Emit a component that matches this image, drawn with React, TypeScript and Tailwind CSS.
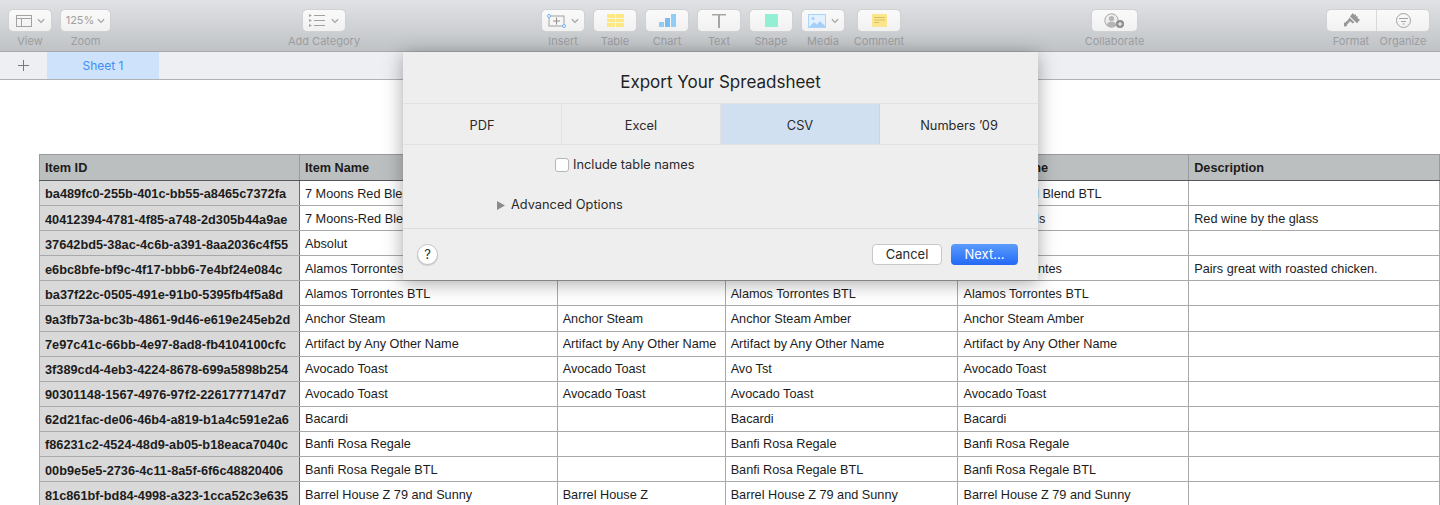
import React from 'react';

const Chevron = () => (
  <svg width="8" height="6" viewBox="0 0 9 6" fill="none" className="shrink-0">
    <path d="M1 1l3.5 3.5L8 1" stroke="#a3a3a3" strokeWidth="1.3" />
  </svg>
);

const ViewIcon = () => (
  <svg width="16" height="12" viewBox="0 0 16 12" fill="none" stroke="#a2a2a2">
    <rect x="0.5" y="0.5" width="15" height="11" />
    <path d="M0.5 3.5h15M5.5 3.5v8" />
  </svg>
);

const CategoryIcon = () => (
  <svg width="17" height="13" viewBox="0 0 17 13" fill="none">
    <path d="M0 0l3 1.5L0 3zM0 5l3 1.5L0 8zM0 10l3 1.5L0 13z" fill="#a2a2a2" />
    <path d="M5 1.5h11M5 6.5h11M5 11.5h11" stroke="#a2a2a2" />
  </svg>
);

const InsertIcon = () => (
  <svg width="19" height="14" viewBox="0 0 19 14" fill="none">
    <rect x="2" y="2" width="15" height="10" stroke="#a2a2a2" fill="#f6f6f6" />
    <path d="M9.5 3.5v7M6 7h7" stroke="#8e8e8e" />
    <circle cx="2" cy="2" r="1.5" fill="#fff" stroke="#6fb1f5" />
    <circle cx="17" cy="12" r="1.5" fill="#fff" stroke="#6fb1f5" />
  </svg>
);

const TableIcon = () => (
  <svg width="17" height="13" viewBox="0 0 17 13">
    <rect width="17" height="13" fill="#fce986" />
    <path d="M0 4.5h17M0 8.5h17M8.5 0v13" stroke="#f8f5dc" strokeWidth="1" />
  </svg>
);

const ChartIcon = () => (
  <svg width="17" height="13" viewBox="0 0 17 13">
    <rect x="0" y="8" width="5" height="5" fill="#8fcdf2" />
    <rect x="6" y="4" width="5" height="9" fill="#79bdf0" />
    <rect x="12" y="0" width="5" height="13" fill="#92cdf6" />
  </svg>
);

const TextIcon = () => (
  <svg width="14" height="14" viewBox="0 0 14 14" fill="#a5a5a5">
    <path d="M0 0h14v1.6H8v12.4H6V1.6H0z" />
  </svg>
);

const MediaIcon = () => (
  <svg width="18" height="14" viewBox="0 0 18 14">
    <rect width="18" height="14" fill="#acd4fa" />
    <rect x="1" y="1" width="16" height="12" fill="#e3f0fd" />
    <circle cx="5" cy="4.5" r="1.6" fill="#a5cff8" />
    <path d="M1 13l5-5 3 2.5 3-3.5 5 5v1z" fill="#a5cff8" />
  </svg>
);

const CommentIcon = () => (
  <svg width="15" height="13" viewBox="0 0 15 13">
    <rect width="15" height="13" fill="#fbe68c" />
    <path d="M2 3.5h11M2 6h11M2 8.5h5" stroke="#c9b765" strokeWidth="0.8" />
  </svg>
);

const CollaborateIcon = () => (
  <svg width="21" height="16" viewBox="0 0 21 16" fill="none">
    <circle cx="7.5" cy="7.5" r="6.7" stroke="#a8a8a8" fill="#ededed" />
    <circle cx="7.5" cy="5.5" r="2.6" fill="#b5b5b5" />
    <path d="M2.5 12c1-2.6 3-3.4 5-3.4s4 .8 5 3.4c-1.3 1.4-3 2.2-5 2.2s-3.7-.8-5-2.2z" fill="#b5b5b5" />
    <circle cx="16" cy="11" r="4" fill="#8d8d8d" />
    <path d="M16 8.8v4.4M13.8 11h4.4" stroke="#fff" />
  </svg>
);

const FormatIcon = () => (
  <svg width="16" height="15" viewBox="0 0 16 15" fill="#979797">
    <path d="M8.8 0l1.3 1.8 1.5-.6.6 2 1.8.6-.5 1.4 2.5 1.6-3 3.4L6 3.6z" />
    <path d="M5.4 4.6l5 4.6-1.7 1.2-2.5-2.2-3 3.2a2 2 0 1 1-1.9-1.8l3.1-3z" />
  </svg>
);

const OrganizeIcon = () => (
  <svg width="15" height="15" viewBox="0 0 15 15" fill="none" stroke="#a2a2a2">
    <circle cx="7.5" cy="7.5" r="7" />
    <path d="M3 5.5h9M5 8.5h5M6.5 11h2" />
  </svg>
);

const toolBtn = 'flex h-[23px] items-center justify-center gap-[5px] rounded-[5px] border border-[#d0d1d3] bg-gradient-to-b from-[#fafafa] to-[#f1f1f1]';

const ToolItem = ({ label, width = 'w-[44px]', children }: { label: string; width?: string; children: React.ReactNode }) => (
  <div className={`flex ${width} shrink-0 flex-col items-center`}>
    <div className={`${toolBtn} w-full`}>{children}</div>
    <span className="mt-[2px] whitespace-nowrap text-[11px] leading-[14px] text-[#9b9da0]">{label}</span>
  </div>
);

const columns = [260, 258, 168, 233, 231, 251];

const rows: string[][] = [
  ['ba489fc0-255b-401c-bb55-a8465c7372fa', '7 Moons Red Blend BTL', '', '', '7 Moons Red Blend BTL', ''],
  ['40412394-4781-4f85-a748-2d305b44a9ae', '7 Moons-Red Blend', '', '', '7 Moons Reds', 'Red wine by the glass'],
  ['37642bd5-38ac-4c6b-a391-8aa2036c4f55', 'Absolut', '', '', 'Absolut', ''],
  ['e6bc8bfe-bf9c-4f17-bbb6-7e4bf24e084c', 'Alamos Torrontes', '', '', 'Alamos Torrontes', 'Pairs great with roasted chicken.'],
  ['ba37f22c-0505-491e-91b0-5395fb4f5a8d', 'Alamos Torrontes BTL', '', 'Alamos Torrontes BTL', 'Alamos Torrontes BTL', ''],
  ['9a3fb73a-bc3b-4861-9d46-e619e245eb2d', 'Anchor Steam', 'Anchor Steam', 'Anchor Steam Amber', 'Anchor Steam Amber', ''],
  ['7e97c41c-66bb-4e97-8ad8-fb4104100cfc', 'Artifact by Any Other Name', 'Artifact by Any Other Name', 'Artifact by Any Other Name', 'Artifact by Any Other Name', ''],
  ['3f389cd4-4eb3-4224-8678-699a5898b254', 'Avocado Toast', 'Avocado Toast', 'Avo Tst', 'Avocado Toast', ''],
  ['90301148-1567-4976-97f2-2261777147d7', 'Avocado Toast', 'Avocado Toast', 'Avocado Toast', 'Avocado Toast', ''],
  ['62d21fac-de06-46b4-a819-b1a4c591e2a6', 'Bacardi', '', 'Bacardi', 'Bacardi', ''],
  ['f86231c2-4524-48d9-ab05-b18eaca7040c', 'Banfi Rosa Regale', '', 'Banfi Rosa Regale', 'Banfi Rosa Regale', ''],
  ['00b9e5e5-2736-4c11-8a5f-6f6c48820406', 'Banfi Rosa Regale BTL', '', 'Banfi Rosa Regale BTL', 'Banfi Rosa Regale BTL', ''],
  ['81c861bf-bd84-4998-a323-1cca52c3e635', 'Barrel House Z 79 and Sunny', 'Barrel House Z', 'Barrel House Z 79 and Sunny', 'Barrel House Z 79 and Sunny', ''],
];

// columns 3 and 4 sit behind the dialog in the header row
const headers = ['Item ID', 'Item Name', '', '', 'Kitchen Name', 'Description'];

const tabs = ['PDF', 'Excel', 'CSV', 'Numbers ’09'];

export default function App() {
  return (
    <div className="relative h-[505px] w-[1440px] overflow-hidden bg-white font-['Inter',sans-serif]">
      {/* Toolbar */}
      <div className="flex h-[52px] items-start border-b border-[#a7a9ad] bg-gradient-to-b from-[#e0e2e5] to-[#c0c3c6] pl-[8px] pt-[9px]">
        <div className="flex gap-[8px]">
          <ToolItem label="View">
            <ViewIcon />
            <Chevron />
          </ToolItem>
          <ToolItem label="Zoom" width="w-[51px]">
            <span className="mr-[-2px] text-[11px] text-[#a0a0a0]">125%</span>
            <Chevron />
          </ToolItem>
        </div>
        <div className="ml-[191px]">
          <ToolItem label="Add Category">
            <CategoryIcon />
            <Chevron />
          </ToolItem>
        </div>
        <div className="ml-[195px] flex gap-[8px]">
          <ToolItem label="Insert">
            <InsertIcon />
            <Chevron />
          </ToolItem>
          <ToolItem label="Table"><TableIcon /></ToolItem>
          <ToolItem label="Chart"><ChartIcon /></ToolItem>
          <ToolItem label="Text"><TextIcon /></ToolItem>
          <ToolItem label="Shape"><div className="h-[13px] w-[13px] bg-[#93efd3]" /></ToolItem>
          <ToolItem label="Media">
            <MediaIcon />
            <Chevron />
          </ToolItem>
          <div className="ml-[4px]">
            <ToolItem label="Comment"><CommentIcon /></ToolItem>
          </div>
        </div>
        <div className="ml-[190px]">
          <ToolItem label="Collaborate" width="w-[47px]"><CollaborateIcon /></ToolItem>
        </div>
        <div className="ml-[188px] flex flex-col">
          <div className="flex h-[23px] w-[104px] rounded-[5px] border border-[#d0d1d3] bg-gradient-to-b from-[#fafafa] to-[#f1f1f1]">
            <div className="flex w-[50px] items-center justify-center border-r border-[#d8d8d8]"><FormatIcon /></div>
            <div className="flex flex-1 items-center justify-center"><OrganizeIcon /></div>
          </div>
          <div className="mt-[2px] flex text-[11px] leading-[14px] text-[#9b9da0]">
            <span className="w-[50px] text-center">Format</span>
            <span className="flex-1 whitespace-nowrap text-center">Organize</span>
          </div>
        </div>
      </div>

      {/* Sheet tabs */}
      <div className="flex h-[28px] border-b border-[#b0b1b5] bg-[#eeeff3]">
        <div className="flex w-[47px] items-center justify-center">
          <svg width="13" height="13" viewBox="0 0 13 13" stroke="#77787a"><path d="M6.5 1v11M1 6.5h11" /></svg>
        </div>
        <div className="flex w-[112px] items-center justify-center bg-[#cfe2fb] text-[12px] text-[#3d8ff2]">Sheet 1</div>
      </div>

      {/* Spreadsheet */}
      <table className="ml-[39px] mt-[74px] table-fixed border-collapse font-['Liberation_Sans',sans-serif] text-[12.7px] text-[#1c1c1c]">
        <colgroup>
          {columns.map((w, i) => <col key={i} style={{ width: w }} />)}
        </colgroup>
        <thead>
          <tr className="h-[26px] bg-[#bcbfc0]">
            {headers.map((h, i) => (
              <th key={i} className="border border-[#989a9b] border-b-[#55585a] px-[5px] pt-[3px] text-left font-bold">{h}</th>
            ))}
          </tr>
        </thead>
        <tbody>
          {rows.map((row) => (
            <tr key={row[0]} className="h-[25.1px]">
              {row.map((cell, i) => (
                <td
                  key={i}
                  className={`overflow-hidden whitespace-nowrap border border-[#a9a9a9] px-[5px] pt-[2px] ${i === 0 ? 'border-r-[#6a6a6a] bg-[#d9d9d9] text-[12.75px] font-bold' : ''}`}
                >
                  {cell}
                </td>
              ))}
            </tr>
          ))}
        </tbody>
      </table>

      {/* Export dialog */}
      <div className="absolute left-[403px] top-[52px] flex h-[228px] w-[635px] flex-col bg-[#eeeeee] text-[#2a2a2a] shadow-[0_3px_18px_rgba(0,0,0,0.35)]">
        <div className="flex h-[51px] items-center justify-center pt-[11px] text-[17px] text-[#1f1f1f]">Export Your Spreadsheet</div>
        <div className="flex h-[42px] border-y border-[#e2e2e2] text-[12.8px]">
          {tabs.map((t) => (
            <div
              key={t}
              className={`flex flex-1 items-center justify-center border-r pt-[3px] last:border-r-0 ${t === 'CSV' ? 'border-[#c6d7ea] bg-[#d0e0f1]' : 'border-[#e2e2e2]'}`}
            >
              {t}
            </div>
          ))}
        </div>
        <div className="flex-1 text-[12.8px] leading-[16px]">
          <div className="flex items-center pl-[152px] pt-[12px]">
            <div className="h-[14px] w-[14px] rounded-[3px] border border-[#b6b6b6] bg-white" />
            <span className="ml-[4px]">Include table names</span>
          </div>
          <div className="flex items-center pl-[94px] pt-[24px]">
            <svg width="8" height="9" viewBox="0 0 8 9" fill="#8a8a8a"><path d="M0 0l8 4.5L0 9z" /></svg>
            <span className="ml-[6px]">Advanced Options</span>
          </div>
        </div>
        <div className="flex h-[52px] items-center border-t border-[#dcdcdc] pl-[14px] pr-[20px]">
          <div className="flex h-[21px] w-[21px] items-center justify-center rounded-full border border-[#c4c4c4] bg-white text-[13px] shadow-[0_1px_1px_rgba(0,0,0,0.15)]">?</div>
          <div className="ml-auto flex gap-[9px] text-[13px]">
            <div className="flex h-[21px] w-[70px] items-center justify-center rounded-[4px] border border-[#c8c8c8] bg-white">Cancel</div>
            <div className="flex h-[21px] w-[67px] items-center justify-center rounded-[4px] bg-gradient-to-b from-[#5a9bfb] to-[#2369f6] text-white">Next...</div>
          </div>
        </div>
      </div>
    </div>
  );
}
